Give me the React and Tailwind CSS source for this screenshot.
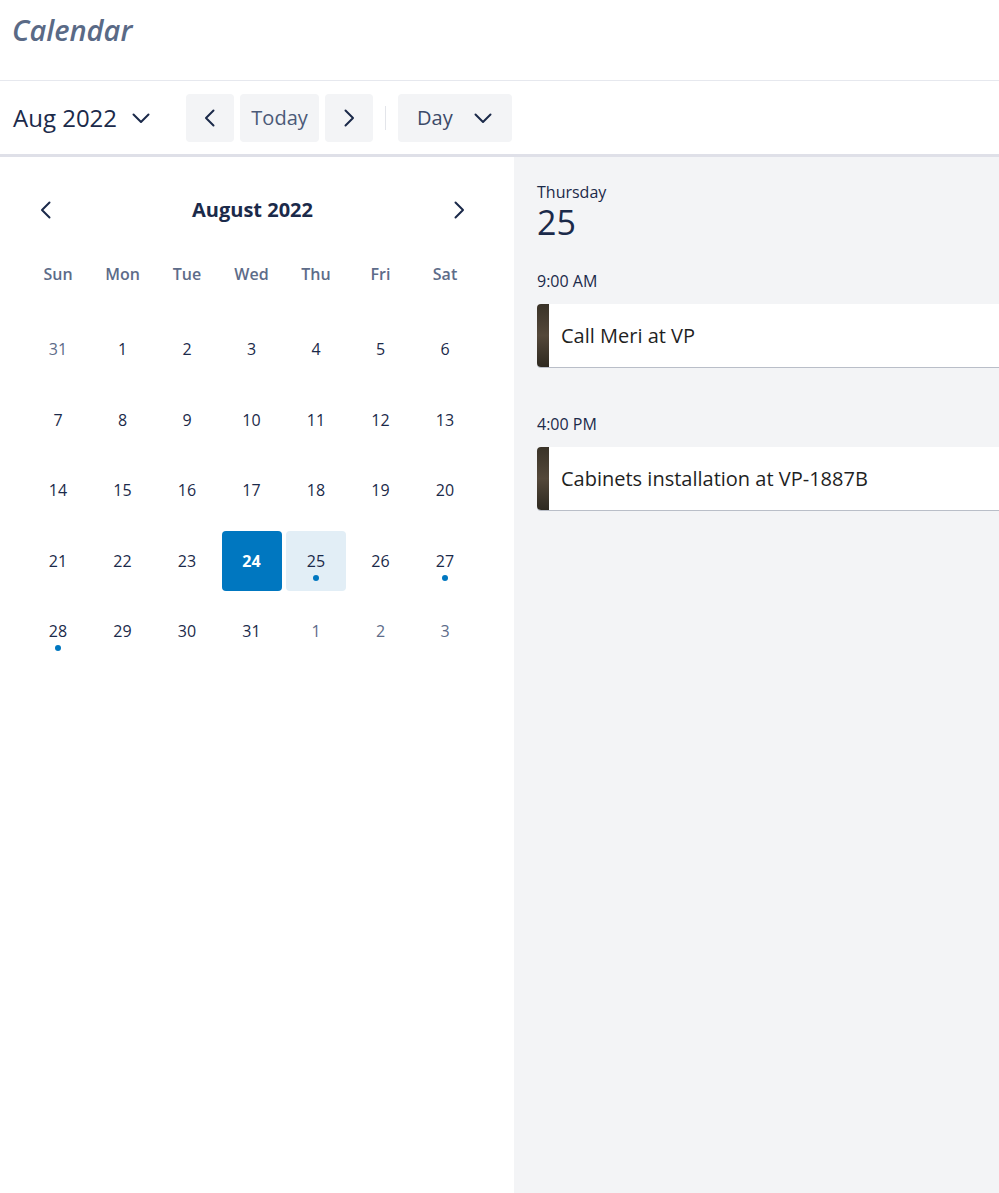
import React from 'react'

const font = { fontFamily: '"Open Sans", "Noto Sans", sans-serif' }

function Chevron({ dir = 'down', size = 24, className = '' }) {
  const paths = {
    down: 'M4.5 8.5l7.5 7.5 7.5-7.5',
    left: 'M15.5 4.5L8 12l7.5 7.5',
    right: 'M8.5 4.5L16 12l-7.5 7.5'
  }
  return (
    <svg width={size} height={size} viewBox="0 0 24 24" fill="none" stroke="currentColor" strokeWidth="2" strokeLinecap="round" strokeLinejoin="round" className={className}>
      <path d={paths[dir]} />
    </svg>
  )
}

// weeks shown in the month grid; muted = day outside August
const weeks = [
  [{ d: 31, muted: true }, { d: 1 }, { d: 2 }, { d: 3 }, { d: 4 }, { d: 5 }, { d: 6 }],
  [{ d: 7 }, { d: 8 }, { d: 9 }, { d: 10 }, { d: 11 }, { d: 12 }, { d: 13 }],
  [{ d: 14 }, { d: 15 }, { d: 16 }, { d: 17 }, { d: 18 }, { d: 19 }, { d: 20 }],
  [{ d: 21 }, { d: 22 }, { d: 23 }, { d: 24, today: true }, { d: 25, selected: true, dot: true }, { d: 26 }, { d: 27, dot: true }],
  [{ d: 28, dot: true }, { d: 29 }, { d: 30 }, { d: 31 }, { d: 1, muted: true }, { d: 2, muted: true }, { d: 3, muted: true }]
]

const days = ['Sun', 'Mon', 'Tue', 'Wed', 'Thu', 'Fri', 'Sat']

const events = [
  { time: '9:00 AM', title: 'Call Meri at VP' },
  { time: '4:00 PM', title: 'Cabinets installation at VP-1887B' }
]

function DayCell({ day }) {
  let cls = 'text-[#1b2a4a] font-medium'
  if (day.muted) cls = 'text-[#5d6c89]'
  let bg = ''
  if (day.today) {
    bg = 'bg-[#0077c0]'
    cls = 'text-white font-bold'
  } else if (day.selected) {
    bg = 'bg-[#e2eef6]'
  }
  return (
    <div className={`relative h-[60px] w-[60px] rounded-[4px] flex items-center justify-center text-[16px] ${bg} ${cls}`}>
      {day.d}
      {day.dot && <span className="absolute bottom-[10px] left-1/2 -translate-x-1/2 w-[6px] h-[6px] rounded-full bg-[#0077c0]"></span>}
    </div>
  )
}

export default function App() {
  return (
    <div className="h-[1193px] flex flex-col bg-white overflow-hidden" style={font}>
      {/* header */}
      <div className="h-[81px] border-b border-[#e6e8ee] px-3 pt-[11px]">
        <h1 className="text-[29px] leading-[38px] font-semibold italic text-[#5a6a86]">Calendar</h1>
      </div>

      {/* toolbar */}
      <div className="h-[76px] flex items-center border-b-[3px] border-[#dfe0e8]">
        <button className="ml-[13px] flex items-center gap-[12px] text-[24px] text-[#1b2a4a]">
          Aug 2022
          <Chevron dir="down" className="text-[#1b2a4a]" />
        </button>
        <div className="ml-[33px] flex items-center gap-[6px]">
          <button className="w-12 h-12 rounded-[4px] bg-[#f3f4f6] flex items-center justify-center text-[#1b2a4a]">
            <Chevron dir="left" />
          </button>
          <button className="w-[79px] h-12 rounded-[4px] bg-[#f3f4f6] text-[20px] text-[#4b5a78]">Today</button>
          <button className="w-12 h-12 rounded-[4px] bg-[#f3f4f6] flex items-center justify-center text-[#1b2a4a]">
            <Chevron dir="right" />
          </button>
        </div>
        <div className="mx-3 w-px h-6 bg-[#e3e5ea]"></div>
        <button className="w-[114px] h-12 rounded-[4px] bg-[#f3f4f6] flex items-center pl-[19px] text-[20px] text-[#3c4a68]">
          Day
          <Chevron dir="down" className="ml-[18px] text-[#1b2a4a]" />
        </button>
      </div>

      <div className="flex-1 flex">
        {/* month picker */}
        <div className="w-[514px] bg-white pl-[28px] pt-[35px]">
          <div className="w-[447px]">
            <div className="flex items-center justify-between h-9">
              <button className="w-9 h-9 flex items-center justify-center text-[#1b2a4a]">
                <Chevron dir="left" />
              </button>
              <div className="text-[20px] font-bold text-[#1b2a4a]">August 2022</div>
              <button className="w-9 h-9 -mr-[2px] flex items-center justify-center text-[#1b2a4a]">
                <Chevron dir="right" />
              </button>
            </div>
            <div className="mt-[26px] grid grid-cols-7 gap-x-[4.5px]">
              {days.map((d) => (
                <div key={d} className="h-10 flex items-center justify-center text-[16px] font-semibold text-[#5d6c89]">{d}</div>
              ))}
            </div>
            <div className="mt-[25px] grid grid-cols-7 gap-x-[4.5px] gap-y-[10.5px]">
              {weeks.flat().map((day, i) => (
                <DayCell key={i} day={day} />
              ))}
            </div>
          </div>
        </div>

        {/* day agenda */}
        <div className="flex-1 bg-[#f3f4f6] pl-[23px] pt-[25px]">
          <div className="text-[16px] leading-[20px] text-[#1b2a4a]">Thursday</div>
          <div className="mt-[2px] text-[34px] leading-[36px] text-[#1b2a4a]">25</div>
          {events.map((ev, i) => (
            <div key={ev.title} className={i === 0 ? 'mt-[30px]' : 'mt-[46px]'}>
              <div className="text-[16px] leading-[22px] text-[#1b2a4a]">{ev.time}</div>
              <div className="mt-3 h-[63px] flex bg-white rounded-l-[4px] overflow-hidden shadow-[0_1px_0_#b9bec8]">
                <div className="w-3 bg-gradient-to-b from-[#3a3328] via-[#54483a] to-[#2e2920]"></div>
                <div className="flex-1 flex items-center pl-3 text-[20px] text-[#1f1f1f]">{ev.title}</div>
              </div>
            </div>
          ))}
        </div>
      </div>
    </div>
  )
}
